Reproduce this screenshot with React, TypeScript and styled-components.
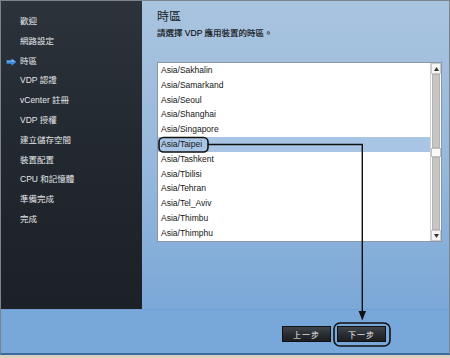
import React from "react";
import styled, { createGlobalStyle } from "styled-components";

const GlobalStyle = createGlobalStyle`
  html, body {
    margin: 0;
    padding: 0;
    background: #d9d0c6;
  }
  body {
    font-family: "Liberation Sans", "Noto Sans CJK TC", sans-serif;
  }
`;

const Frame = styled.div`
  position: relative;
  width: 450px;
  height: 355px;
  box-sizing: border-box;
  border: 1px solid #7d838b;
  border-bottom: 2px solid #3c6a9c;
  display: flex;
  flex-direction: column;
  background: #78a7d9;
  overflow: hidden;
`;

const Main = styled.div`
  display: flex;
  height: 308px;
  flex-shrink: 0;
`;

const Sidebar = styled.nav`
  width: 141px;
  height: 100%;
  background: linear-gradient(180deg, #2c333b 0%, #232930 45%, #1c2027 100%);
  padding-top: 11px;
  box-sizing: border-box;
  display: flex;
  flex-direction: column;
`;

const NavItem = styled.div<{ $active?: boolean }>`
  position: relative;
  height: 19.8px;
  line-height: 19.8px;
  padding-left: 19px;
  font-size: 8.5px;
  color: #e4e7ea;
  white-space: nowrap;
`;

const ActiveArrow = styled.svg`
  position: absolute;
  left: 5px;
  top: 6px;
`;

const Content = styled.section`
  flex: 1;
  background: linear-gradient(180deg, #a9c4df 0%, #98b9dc 50%, #7ba8d8 100%);
  padding: 9px 4px 0 15px;
  box-sizing: border-box;
  display: flex;
  flex-direction: column;
`;

const Title = styled.h1`
  margin: 0;
  font-size: 12px;
  line-height: 14px;
  font-weight: normal;
  color: #1b1f24;
`;

const Subtitle = styled.p`
  margin: 3.5px 0 0;
  font-size: 8.5px;
  line-height: 11px;
  color: #0c0c0c;
  -webkit-text-stroke: 0.15px #0c0c0c;
`;

const ListBox = styled.div`
  margin-top: 23.5px;
  width: 285px;
  height: 180px;
  box-sizing: border-box;
  border: 1px solid #8b97a3;
  background: #fff;
  display: flex;
`;

const Rows = styled.div`
  flex: 1;
  display: flex;
  flex-direction: column;
`;

const Row = styled.div<{ $selected?: boolean }>`
  height: 14.8px;
  line-height: 14.8px;
  padding-left: 3px;
  font-size: 8.5px;
  color: #151515;
  background: ${(p) => (p.$selected ? "#a9c5e6" : "transparent")};
`;

const Scrollbar = styled.div`
  width: 10px;
  display: flex;
  flex-direction: column;
  border-left: 1px solid #d0d0d0;
`;

const ScrollButton = styled.div`
  height: 11px;
  display: flex;
  align-items: center;
  justify-content: center;
  background: #f4f4f4;
  border: 1px solid #c9c9c9;
  box-sizing: border-box;
`;

const Track = styled.div<{ $grow: number }>`
  flex: ${(p) => p.$grow};
  background: #c6c6c6;
  border: 1px solid #b3b3b3;
  box-sizing: border-box;
  margin: 0 1px;
`;

const Thumb = styled.div`
  height: 9px;
  background: #fafafa;
  border: 1px solid #c0c0c0;
  box-sizing: border-box;
`;

const Footer = styled.footer`
  flex: 1;
  display: flex;
  justify-content: flex-end;
  align-items: flex-start;
  gap: 6px;
  padding: 16px 63px 0 0;
  border-top: 1px solid rgba(40, 80, 130, 0.08);
`;

const Button = styled.button`
  width: 49px;
  height: 16px;
  padding: 0;
  border: 1px solid #0f1113;
  background: linear-gradient(180deg, #40454b 0%, #2a2e33 50%, #1b1e22 100%);
  color: #f2f2f2;
  font-family: "Liberation Sans", "Noto Sans CJK TC", sans-serif;
  font-size: 8px;
  letter-spacing: 1px;
`;

const Overlay = styled.svg`
  position: absolute;
  left: -1px;
  top: -1px;
  pointer-events: none;
`;

const steps = [
  "歡迎",
  "網路設定",
  "時區",
  "VDP 認證",
  "vCenter 註冊",
  "VDP 授權",
  "建立儲存空間",
  "裝置配置",
  "CPU 和記憶體",
  "準備完成",
  "完成",
];

const zones = [
  "Asia/Sakhalin",
  "Asia/Samarkand",
  "Asia/Seoul",
  "Asia/Shanghai",
  "Asia/Singapore",
  "Asia/Taipei",
  "Asia/Tashkent",
  "Asia/Tbilisi",
  "Asia/Tehran",
  "Asia/Tel_Aviv",
  "Asia/Thimbu",
  "Asia/Thimphu",
];

export default function App() {
  return (
    <>
      <GlobalStyle />
      <Frame>
        <Main>
          <Sidebar>
            {steps.map((s) => (
              <NavItem key={s} $active={s === "時區"}>
                {s === "時區" && (
                  <ActiveArrow width="11" height="8" viewBox="0 0 11 8">
                    <path d="M0.5 2.3 H5.5 V0.3 L10.5 4 L5.5 7.7 V5.7 H0.5 Z" fill="#3f8de0" />
                    <path d="M1 2.8 H6 V1.4 L9.2 3.6 H1 Z" fill="#8cc2f5" />
                  </ActiveArrow>
                )}
                {s}
              </NavItem>
            ))}
          </Sidebar>
          <Content>
            <Title>時區</Title>
            <Subtitle>請選擇 VDP 應用裝置的時區。</Subtitle>
            <ListBox>
              <Rows>
                {zones.map((z) => (
                  <Row key={z} $selected={z === "Asia/Taipei"}>
                    {z}
                  </Row>
                ))}
              </Rows>
              <Scrollbar>
                <ScrollButton>
                  <svg width="5" height="4" viewBox="0 0 5 4">
                    <path d="M2.5 0 L5 4 H0 Z" fill="#333" />
                  </svg>
                </ScrollButton>
                <Track $grow={74} />
                <Thumb />
                <Track $grow={72} />
                <ScrollButton>
                  <svg width="5" height="4" viewBox="0 0 5 4">
                    <path d="M0 0 H5 L2.5 4 Z" fill="#333" />
                  </svg>
                </ScrollButton>
              </Scrollbar>
            </ListBox>
          </Content>
        </Main>
        <Footer>
          <Button>上一步</Button>
          <Button>下一步</Button>
        </Footer>
        <Overlay width="450" height="358" viewBox="0 0 450 358">
          <rect x="159" y="137.5" width="49" height="14.5" rx="4.5" fill="none" stroke="#111" strokeWidth="1.6" />
          <polyline points="208,144.5 362.3,144.5 362.3,313" fill="none" stroke="#111" strokeWidth="1.4" />
          <path d="M358.6 311 L366 311 L362.3 320.5 Z" fill="#111" />
          <rect x="334" y="323" width="56" height="23" rx="6" fill="none" stroke="#111" strokeWidth="1.6" />
        </Overlay>
      </Frame>
    </>
  );
}
